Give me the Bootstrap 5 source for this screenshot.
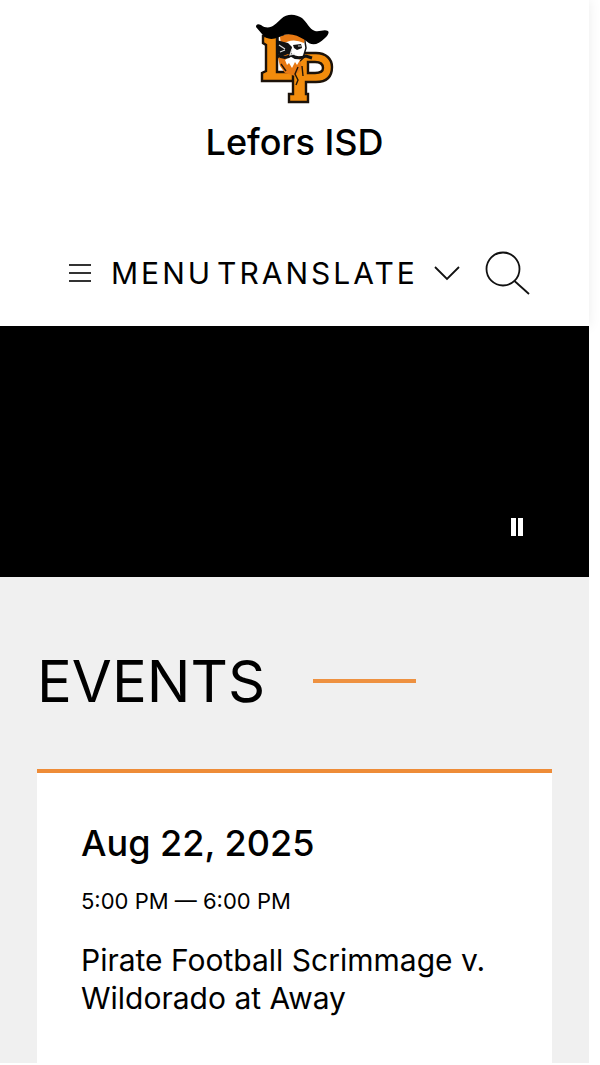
<!DOCTYPE html>
<html lang="en">
<head>
<meta charset="utf-8">
<meta name="viewport" content="width=device-width, initial-scale=1">
<title>Lefors ISD</title>
<link href="https://cdn.jsdelivr.net/npm/bootstrap@5.3.0/dist/css/bootstrap.min.css" rel="stylesheet">
<style>
body { font-family: Inter, "Liberation Sans", sans-serif; color: #000; background: #fff; padding-right: 11px; }
.site-header { padding: 14px 56px 31px; box-shadow: 0 0 12px rgba(0,0,0,.08); }
.brand-link { color: #000; font-size: 36px; line-height: 44px; font-weight: 500; }
.tool-row { margin-top: 87px; padding: 0 2px 0 13px; }
.tool-btn { font-size: 30px; line-height: 44px; color: #000; background: none; border: 0; padding: 0; }
.caps { letter-spacing: 3px; }
.hero { height: 251px; background: #000; padding: 0 64px 40px; }
.events { background: #f0f0f0; padding: 68px 37px 0; }
.events-title { font-size: 58px; line-height: 72px; font-weight: 400; }
.title-rule { width: 103px; height: 4px; background: #ee9140; }
.event-card { border-top: 4px solid #ee8c38; background: #fff; margin-top: 52px; padding: 48px 44px 46px; }
.event-date { font-size: 36px; line-height: 44px; font-weight: 500; }
.event-time { font-size: 22px; line-height: 28px; margin-top: 22px; }
.event-name { font-size: 30px; line-height: 38px; margin-top: 26px; }
</style>
</head>
<body>
<header class="site-header d-flex flex-column align-items-center">
  <a href="#" class="brand-link d-flex flex-column align-items-center text-decoration-none">
    <svg width="80" height="90" viewBox="0 0 80 90" class="mb-3" aria-hidden="true">
      <g fill="#f28c0c" stroke="#1c1209" stroke-width="2.4" stroke-linejoin="miter">
        <path d="M9 22H23V58H41V67H8V59L12 57V31L9 29Z"/>
        <path fill-rule="evenodd" d="M36 39H62C72 39 78 45 78 53C78 63 72 68 62 68H52V80H54V88H35V80H39V48L36 47ZM54 48V59H61C66 59 69 57 69 54C69 50 66 48 61 48Z"/>
      </g>
      <path d="M24 22L50 21L52 34L49 44L40 53L32 52L24 43Z" fill="#fff" stroke="#111" stroke-width="1.5"/>
      <path d="M26 23Q38 16 51 24L50 29Q38 23 27 31Z" fill="#e87912"/>
      <path d="M22 26L34 29L38 33L37 39L31 44L22 39ZM39 31L47 30L48 34L43 36L40 34Z" fill="#111"/>
      <path d="M24 44L34 40L39 42L50 43L46 46L48 54L41 62L31 59L26 52Z" fill="#e87912"/>
      <path d="M31 46Q38 39 46 46L43 51L41 48L38 54L35 49L33 51Z" fill="#fff"/>
      <path d="M24 41Q31 46 37 41Q43 46 52 42L58 44" fill="none" stroke="#111" stroke-width="3"/>
      <path d="M27 50L32 57M44 53L41 60L44 66L42 71M48 52L49 62" fill="none" stroke="#21150a" stroke-width="1.4"/>
      <path d="M25 31L31 35M26 38L31 36M44 32L47 32M38 35L36 41L41 40" stroke="#ddd" stroke-width="1.2" fill="none"/>
      <path d="M2 13Q2 9 7 11C15 17 21 11 27 5C33-1 42 0 48 4C53 8 55 15 61 17C66 18 70 15 74 17Q76 19 71 24C63 32 57 32 51 26C42 20 33 18 25 23Q14 28 8 20Z" fill="#000"/>
    </svg>
    <span>Lefors ISD</span>
  </a>
  <nav class="tool-row w-100 d-flex align-items-center justify-content-between" aria-label="Site tools">
    <div class="d-flex align-items-center gap-1">
      <button type="button" class="tool-btn d-flex align-items-center">
        <svg width="22" height="20" viewBox="0 0 22 20" class="me-3" stroke="#333" stroke-width="1.8" aria-hidden="true"><path d="M0 2H22M0 10H22M0 18H22"/></svg>
        <span class="caps ms-1">MENU</span>
      </button>
      <button type="button" class="tool-btn d-flex align-items-center">
        <span class="caps">TRANSLATE</span>
        <svg width="26" height="16" viewBox="0 0 26 16" class="ms-3" fill="none" stroke="#111" stroke-width="1.8" aria-hidden="true"><path d="M1 2L13 14L25 2"/></svg>
      </button>
    </div>
    <button type="button" class="tool-btn d-flex" aria-label="Search">
      <svg width="46" height="44" viewBox="0 0 46 44" fill="none" stroke="#111" stroke-width="1.8" aria-hidden="true"><circle cx="18" cy="18" r="16.500"/><path d="M29.500 30L44 43"/></svg>
    </button>
  </nav>
</header>
<main>
  <section class="hero d-flex align-items-end justify-content-end" aria-label="Slideshow">
    <button type="button" class="tool-btn d-flex" aria-label="Pause">
      <svg width="14" height="20" viewBox="0 0 14 20" fill="#fff" aria-hidden="true"><path d="M0 1H5V19H0ZM7 1H12V19H7Z"/></svg>
    </button>
  </section>
  <section class="events">
    <div class="d-flex align-items-center">
      <h2 class="events-title mb-0">EVENTS</h2>
      <div class="title-rule ms-5"></div>
    </div>
    <article class="event-card">
      <h3 class="event-date mb-0">Aug 22, 2025</h3>
      <p class="event-time mb-0">5:00 PM — 6:00 PM</p>
      <p class="event-name mb-0">Pirate Football Scrimmage v. Wildorado at Away</p>
    </article>
  </section>
</main>
<script src="https://cdn.jsdelivr.net/npm/bootstrap@5.3.0/dist/js/bootstrap.bundle.min.js"></script>
</body>
</html>
